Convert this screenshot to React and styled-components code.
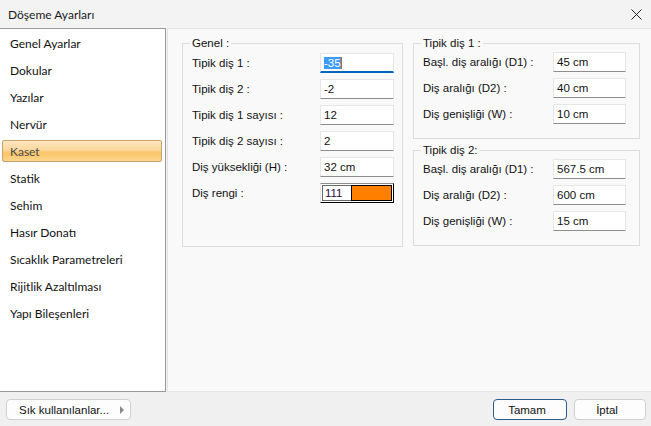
import styled, { createGlobalStyle } from "styled-components";

const GlobalStyle = createGlobalStyle`
  html, body { margin: 0; padding: 0; }
  body { font-family: Lato, "Noto Sans", sans-serif; background: #f0f0f0; }
  * { box-sizing: border-box; }
`;

const Window = styled.div`
  width: 651px;
  height: 426px;
  display: flex;
  flex-direction: column;
  background: #f0f0f0;
  overflow: hidden;
`;

const TitleBar = styled.div`
  height: 28px;
  display: flex;
  align-items: center;
  justify-content: space-between;
  padding: 0 9px 0 8px;
  background: #f3f3f3;
  font-size: 12px;
  color: #1a1a1a;
`;

const Body = styled.div`
  flex: 1;
  display: flex;
  gap: 1px;
`;

const Sidebar = styled.ul`
  width: 166px;
  margin: 0;
  padding: 3px 3px 0 2px;
  list-style: none;
  background: #fff;
  border: 1px solid #9a9a9a;
  border-left: none;
  display: flex;
  flex-direction: column;
  gap: 5px;
`;

const MenuItem = styled.li`
  height: 22px;
  display: flex;
  align-items: center;
  padding-left: 7px;
  font-size: 12px;
  color: ${(p) => (p.$active ? "#4a4a4a" : "#111")};
  border-radius: 2px;
  border: 1px solid ${(p) => (p.$active ? "#c9a46a" : "transparent")};
  background: ${(p) =>
    p.$active
      ? "linear-gradient(to bottom, #fde6c0 0%, #fcd79c 45%, #fbc469 60%, #fcd68c 100%)"
      : "transparent"};
`;

const Content = styled.div`
  flex: 1;
  background: #f9f9f9;
  border: 1px solid #e3e3e3;
  border-right: none;
  padding: 8px 10px 0 14px;
  display: flex;
  gap: 10px;
  align-items: flex-start;
  font-family: "Liberation Sans", Arial, sans-serif;
  font-size: 11px;
  color: #111;
`;

const Column = styled.div`
  display: flex;
  flex-direction: column;
  gap: 5px;
  width: ${(p) => p.$width}px;
`;

const Group = styled.fieldset`
  margin: 0;
  border: 1px solid #dcdcdc;
  padding: ${(p) => p.$top}px ${(p) => p.$right}px 0 9px;
  height: ${(p) => p.$height}px;
`;

const Legend = styled.legend`
  padding: 0 2px;
  margin-left: -2px;
  font-size: 11.5px;
  color: #111;
`;

const Fields = styled.div`
  display: grid;
  grid-template-columns: 1fr ${(p) => p.$input}px;
  grid-auto-rows: 20px;
  row-gap: 6px;
  align-items: center;
`;

const Label = styled.span`
  white-space: nowrap;
  font-size: 11.5px;
`;

const Input = styled.div`
  height: 20px;
  display: flex;
  align-items: center;
  padding-left: 3px;
  background: #fff;
  border: 1px solid #e6e6e6;
  border-bottom: ${(p) => (p.$focused ? "2px solid #0067c0" : "1px solid #8d8d8d")};
  color: #111;
  font-size: 11.5px;
`;

const Selected = styled.span`
  background: #3d9bff;
  color: #fff;
  border-right: 1px solid #d06000;
`;

const ColorField = styled.div`
  height: 20px;
  display: flex;
  border: 1px solid #000;
  border-top-color: #8d8d8d;
  border-left-color: #e6e6e6;
  background: #fff;
  padding: 1px;
`;

const ColorCode = styled.span`
  width: 29px;
  display: flex;
  align-items: center;
  padding-left: 2px;
  border: 1px solid #6a6a6a;
  border-right: none;
  color: #2a0a3a;
  font-size: 11.5px;
`;

const Swatch = styled.span`
  flex: 1;
  background: #ff7f00;
  border: 1px solid #000;
`;

const Footer = styled.div`
  height: 34px;
  display: flex;
  align-items: center;
  justify-content: space-between;
  padding: 1px 5px 0 6px;
  font-family: "Liberation Sans", Arial, sans-serif;
`;

const Buttons = styled.div`
  display: flex;
  gap: 7px;
`;

const Button = styled.button`
  height: 21px;
  width: ${(p) => p.$width}px;
  display: flex;
  align-items: center;
  justify-content: ${(p) => (p.$menu ? "space-between" : "center")};
  padding: 0 6px 0 ${(p) => (p.$menu ? 12 : 0)}px;
  background: #fdfdfd;
  border: 1px solid ${(p) => (p.$primary ? "#2a5d8f" : "#d0d0d0")};
  border-radius: 4px;
  font-family: inherit;
  font-size: 11.5px;
  color: #111;
`;

const Arrow = styled.span`
  width: 0;
  height: 0;
  border-top: 4px solid transparent;
  border-bottom: 4px solid transparent;
  border-left: 4px solid #8a8a8a;
`;

const menu = [
  "Genel Ayarlar",
  "Dokular",
  "Yazılar",
  "Nervür",
  "Kaset",
  "Statik",
  "Sehim",
  "Hasır Donatı",
  "Sıcaklık Parametreleri",
  "Rijitlik Azaltılması",
  "Yapı Bileşenleri",
];

const dis1 = [
  ["Başl. diş aralığı (D1) :", "45 cm"],
  ["Diş aralığı (D2) :", "40 cm"],
  ["Diş genişliği (W) :", "10 cm"],
];

const dis2 = [
  ["Başl. diş aralığı (D1) :", "567.5 cm"],
  ["Diş aralığı (D2) :", "600 cm"],
  ["Diş genişliği (W) :", "15 cm"],
];

const SideGroup = ({ title, rows, height, top }) => (
  <Group $right={13} $height={height} $top={top}>
    <Legend>{title}</Legend>
    <Fields $input={73}>
      {rows.flatMap(([label, value]) => [
        <Label key={label}>{label}</Label>,
        <Input key={label + "v"}>{value}</Input>,
      ])}
    </Fields>
  </Group>
);

export default function App() {
  return (
    <Window>
      <GlobalStyle />
      <TitleBar>
        <span>Döşeme Ayarları</span>
        <svg width="11" height="11" viewBox="0 0 11 11">
          <path d="M0.5 0.5 L10.5 10.5 M10.5 0.5 L0.5 10.5" stroke="#222" strokeWidth="1" />
        </svg>
      </TitleBar>
      <Body>
        <Sidebar>
          {menu.map((m) => (
            <MenuItem key={m} $active={m === "Kaset"}>
              {m}
            </MenuItem>
          ))}
        </Sidebar>
        <Content>
          <Column $width={221}>
            <Group $right={8} $height={210} $top={4}>
              <Legend>Genel :</Legend>
              <Fields $input={74}>
                <Label>Tipik diş 1 :</Label>
                <Input $focused>
                  <Selected>-35</Selected>
                </Input>
                <Label>Tipik diş 2 :</Label>
                <Input>-2</Input>
                <Label>Tipik diş 1 sayısı :</Label>
                <Input>12</Input>
                <Label>Tipik diş 2 sayısı :</Label>
                <Input>2</Input>
                <Label>Diş yüksekliği (H) :</Label>
                <Input>32 cm</Input>
                <Label>Diş rengi :</Label>
                <ColorField>
                  <ColorCode>111</ColorCode>
                  <Swatch />
                </ColorField>
              </Fields>
            </Group>
          </Column>
          <Column $width={227}>
            <SideGroup title="Tipik diş 1 :" rows={dis1} height={102} top={3} />
            <SideGroup title="Tipik diş 2:" rows={dis2} height={102} top={3} />
          </Column>
        </Content>
      </Body>
      <Footer>
        <Button $menu $width={125}>
          Sık kullanılanlar...
          <Arrow />
        </Button>
        <Buttons>
          <Button $primary $width={74}>Tamam</Button>
          <Button $width={72}>İptal</Button>
        </Buttons>
      </Footer>
    </Window>
  );
}
